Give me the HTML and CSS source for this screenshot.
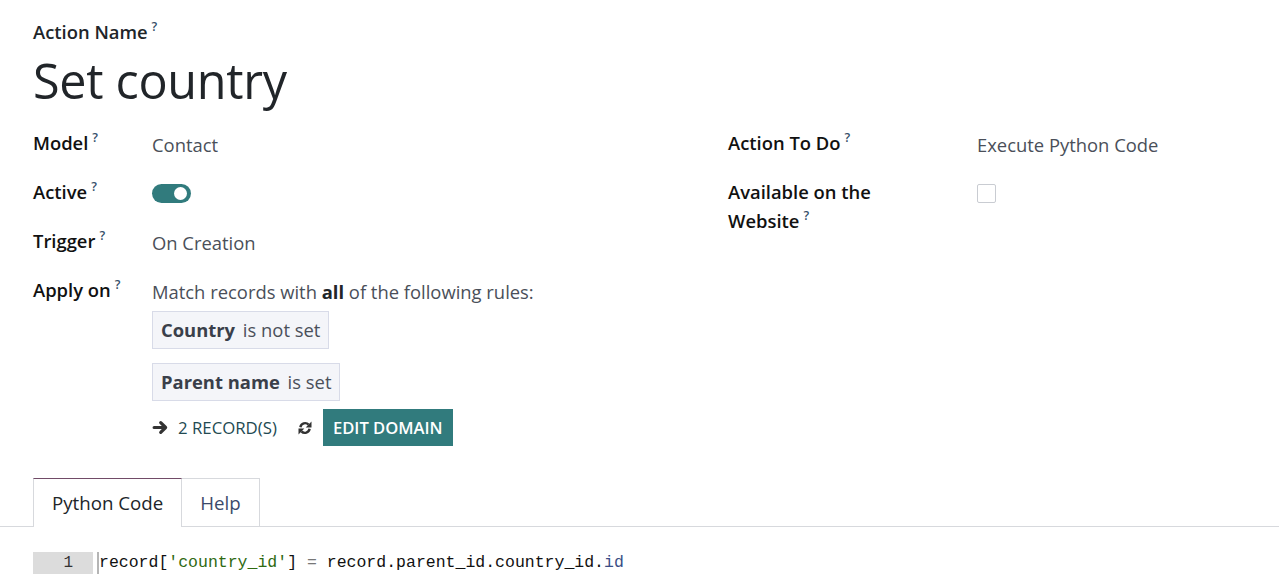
FILE: index.html
```html
<!DOCTYPE html>
<html>
<head>
<meta charset="utf-8">
<link rel="stylesheet" href="styles.css">
</head>
<body>
<div class="sheet">
  <div class="title-block">
    <div class="title-label">Action Name<sup>?</sup></div>
    <h1 class="title">Set country</h1>
  </div>
  <div class="groups">
    <div class="group left">
      <div class="row">
        <div class="label">Model<sup>?</sup></div>
        <div class="value">Contact</div>
      </div>
      <div class="row">
        <div class="label">Active<sup>?</sup></div>
        <div class="value"><span class="toggle"><span class="knob"></span></span></div>
      </div>
      <div class="row">
        <div class="label">Trigger<sup>?</sup></div>
        <div class="value">On Creation</div>
      </div>
      <div class="row">
        <div class="label">Apply on<sup>?</sup></div>
        <div class="value domain">
          <div class="domain-intro">Match records with <b>all</b> of the following rules:</div>
          <div class="chip"><b>Country</b> is not set</div>
          <div class="chip"><b>Parent name</b> is set</div>
          <div class="domain-actions">
            <span class="records">
              <svg class="arrow" viewBox="0 0 16 16" width="17" height="17"><path d="M2 8h10.5M8.2 3.4L12.8 8l-4.6 4.6" stroke="#333" stroke-width="3" fill="none" stroke-linecap="round" stroke-linejoin="round"/></svg>
              2 RECORD(S)
            </span>
            <svg class="refresh" viewBox="0 0 16 16" width="16" height="16"><path d="M3.4 7.2A4.8 4.8 0 0 1 11.6 4.6M12.6 8.8A4.8 4.8 0 0 1 4.4 11.4" stroke="#333" stroke-width="2.4" fill="none"/><path d="M14.5 1.6v5.8H8.7z M1.5 14.4V8.6h5.8z" fill="#333"/></svg>
            <span class="btn">EDIT DOMAIN</span>
          </div>
        </div>
      </div>
    </div>
    <div class="group right">
      <div class="row">
        <div class="label">Action To Do<sup>?</sup></div>
        <div class="value">Execute Python Code</div>
      </div>
      <div class="row">
        <div class="label">Available on the Website<sup>?</sup></div>
        <div class="value"><span class="checkbox"></span></div>
      </div>
    </div>
  </div>
</div>
<div class="tabs">
  <div class="tab active">Python Code</div>
  <div class="tab">Help</div>
</div>
<div class="code">
  <div class="gutter">1</div>
  <div class="line"><span class="cursor"></span>record[<span class="str">'country_id'</span>] <span class="op">=</span> record.parent_id.country_id.<span class="attr">id</span></div>
</div>
</body>
</html>
```
FILE: styles.css
```css
html, body {
  margin: 0;
  background: #fff;
}
body {
  font-family: "Open Sans", "Noto Sans", sans-serif;
  color: #212529;
  font-size: 18.4px;
}
.sheet {
  padding: 0 33px;
}
sup {
  font-size: 12.5px;
  line-height: 0;
  font-weight: 600;
  color: #374f6a;
  vertical-align: baseline;
  position: relative;
  top: -8px;
  margin-left: 4px;
}
.title-block {
  padding-top: 18px;
}
.title-label {
  font-weight: 600;
  font-size: 18.4px;
  line-height: 28px;
}
.title {
  margin: 3px 0 0;
  font-weight: 400;
  font-size: 48.5px;
  line-height: 62px;
  letter-spacing: -0.3px;
  color: #212529;
}
.groups {
  display: grid;
  grid-template-columns: 695px 1fr;
  margin-top: 17px;
}
.group.left .row {
  display: grid;
  grid-template-columns: 119px 1fr;
  min-height: 49px;
}
.group.right .row {
  display: grid;
  grid-template-columns: 249px 1fr;
  min-height: 49px;
}
.label {
  font-weight: 600;
  font-size: 18.4px;
  line-height: 29px;
  color: #111;
}
.group.right .label {
  width: 165px;
}
.value {
  font-size: 18.4px;
  line-height: 29px;
  color: #4a4f59;
  padding-top: 2px;
}
.toggle {
  display: inline-block;
  width: 39px;
  height: 19px;
  border-radius: 10px;
  background: #317b7d;
  position: relative;
  vertical-align: middle;
  margin-top: -5px;
}
.knob {
  position: absolute;
  right: 4px;
  top: 3px;
  width: 13px;
  height: 13px;
  border-radius: 50%;
  background: #fff;
}
.checkbox {
  display: inline-block;
  width: 19px;
  height: 19px;
  border: 1px solid #c9ccd2;
  border-radius: 2px;
  box-sizing: border-box;
  vertical-align: middle;
  margin-top: -6px;
}
.domain {
  display: flex;
  flex-direction: column;
  align-items: flex-start;
}
.domain-intro b {
  color: #212529;
}
.chip {
  margin-top: 5px;
  border: 1px solid #d8dbe8;
  background: #f4f5f9;
  padding: 3px 8px;
  line-height: 30px;
  color: #4a4f59;
}
.chip + .chip {
  margin-top: 14px;
}
.chip b {
  color: #3a3f4a;
  margin-right: 3px;
}
.domain-actions {
  display: flex;
  align-items: center;
  margin-top: 8px;
  height: 37px;
}
.records {
  display: flex;
  align-items: center;
  gap: 9px;
  font-size: 16.8px;
  color: #234a52;
  font-weight: 500;
}
.refresh {
  margin-left: 20px;
}
.btn {
  margin-left: 10px;
  background: #317b7d;
  color: #fff;
  font-weight: 600;
  font-size: 16.6px;
  height: 37px;
  line-height: 37px;
  padding: 0 10px;
}
.tabs {
  margin-top: 32px;
  display: flex;
  padding-left: 33px;
  border-bottom: 1px solid #d7d9dd;
}
.tab {
  height: 47px;
  line-height: 47px;
  padding: 0 18px;
  font-size: 18.7px;
  color: #3b4a6b;
  border: 1px solid #d7d9dd;
  border-bottom: none;
  margin-bottom: -1px;
  background: #fff;
}
.tab.active {
  color: #212529;
  border-top: 1px solid #714b67;
  height: 48px;
}
.tab + .tab {
  border-left: none;
}
.code {
  display: flex;
  margin-top: 25px;
  padding-left: 33px;
  height: 22px;
  align-items: stretch;
}
.gutter {
  width: 60px;
  background: #dcdcdc;
  text-align: right;
  padding-right: 20px;
  box-sizing: border-box;
  font-family: "Liberation Mono", "DejaVu Sans Mono", monospace;
  font-size: 16px;
  line-height: 22px;
  color: #333;
}
.line {
  font-family: "Liberation Mono", "DejaVu Sans Mono", monospace;
  font-size: 16.5px;
  line-height: 22px;
  color: #111;
  padding-left: 6px;
  position: relative;
  white-space: pre;
}
.cursor {
  position: absolute;
  left: 4px;
  top: 0;
  width: 2px;
  height: 22px;
  background: #b5b5b5;
}
.str { color: #2f6a12; }
.op { color: #777; }
.attr { color: #3b4e86; }
```
